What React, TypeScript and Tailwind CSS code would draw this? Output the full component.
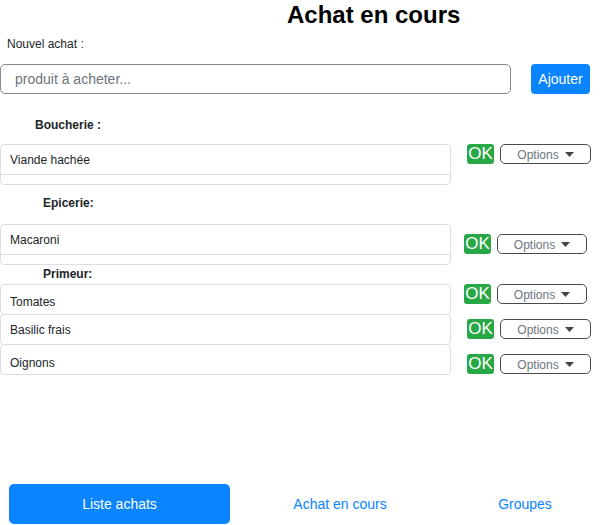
import React from "react";

type Act = { mt: string; ml: string; optW: string };

function Actions({ mt, ml, optW }: Act) {
  return (
    <div className={`flex items-start ${mt} ${ml}`}>
      <button className="h-[20px] w-[27px] rounded-[3px] bg-[#28a745] text-[17px] leading-[20px] text-white flex items-center justify-center">
        OK
      </button>
      <button
        className={`ml-[6px] h-[20px] ${optW} rounded-[5px] border border-[#4a4a4a] bg-white flex items-center justify-center gap-[6px] text-[12px] text-[#6c757d]`}
      >
        <span className="mt-px">Options</span>
        <svg width="9" height="5" viewBox="0 0 9 5">
          <path d="M0 0 L9 0 L4.5 5 Z" fill="#444" />
        </svg>
      </button>
    </div>
  );
}

function Item({ label, round = "rounded-[4px]", pt = "" }: { label: string; round?: string; pt?: string }) {
  return (
    <div
      className={`h-[31px] w-[451px] ${round} ${pt} border border-[#dedede] bg-white pl-[9px] flex items-center text-[12px] text-[#212529]`}
    >
      {label}
    </div>
  );
}

function Group({ label }: { label: string }) {
  return (
    <div className="w-[451px]">
      <Item label={label} round="rounded-t-[4px]" />
      <div className="-mt-px h-[11px] w-[451px] rounded-b-[4px] border border-[#dedede]" />
    </div>
  );
}

export default function App() {
  return (
    <div className="w-[601px] h-[525px] bg-white font-['Liberation_Sans',Arial,sans-serif] text-[#212529] overflow-hidden">
      <h1 className="mt-[1px] h-[28px] pl-[287px] text-[24px] leading-[28px] font-bold text-black">
        Achat en cours
      </h1>

      <div className="mt-[8px] h-[14px] pl-[7px] text-[12px] leading-[14px]">Nouvel achat :</div>

      <div className="mt-[13px] flex items-start">
        <input
          className="h-[30px] w-[511px] rounded-[5px] border border-[#8a8a8a] pl-[14px] text-[14px] outline-none placeholder:text-[#6c757d]"
          placeholder="produit à acheter..."
        />
        <button className="ml-[20px] h-[30px] w-[59px] rounded-[4px] bg-[#0a84ff] text-[14px] text-white">
          Ajouter
        </button>
      </div>

      <div className="mt-[24px] h-[14px] pl-[35px] text-[12px] leading-[14px] font-bold">Boucherie :</div>

      <div className="mt-[12px] flex items-start">
        <Group label="Viande hachée" />
        <Actions mt="mt-0" ml="ml-[16px]" optW="w-[91px]" />
      </div>

      <div className="mt-[11px] h-[14px] pl-[43px] text-[12px] leading-[14px] font-bold">Epicerie:</div>

      <div className="mt-[14px] flex items-start">
        <Group label="Macaroni" />
        <Actions mt="mt-[10px]" ml="ml-[13px]" optW="w-[90px]" />
      </div>

      <div className="mt-[2px] h-[14px] pl-[43px] text-[12px] leading-[14px] font-bold">Primeur:</div>

      <div className="mt-[3px] flex items-start">
        <Item label="Tomates" pt="pt-[4px]" />
        <Actions mt="mt-0" ml="ml-[13px]" optW="w-[90px]" />
      </div>
      <div className="-mt-px flex items-start">
        <Item label="Basilic frais" />
        <Actions mt="mt-[5px]" ml="ml-[16px]" optW="w-[91px]" />
      </div>
      <div className="-mt-px flex items-start">
        <Item label="Oignons" pt="pt-[6px]" />
        <Actions mt="mt-[10px]" ml="ml-[16px]" optW="w-[91px]" />
      </div>

      <nav className="mt-[109px] flex items-center text-[14px]">
        <button className="ml-[9px] h-[40px] w-[221px] rounded-[5px] bg-[#0a84ff] pt-px text-white">Liste achats</button>
        <div className="w-[220px] pt-px text-center text-[#0a84ff]">Achat en cours</div>
        <div className="w-[150px] pt-px text-center text-[#0a84ff]">Groupes</div>
      </nav>
    </div>
  );
}
